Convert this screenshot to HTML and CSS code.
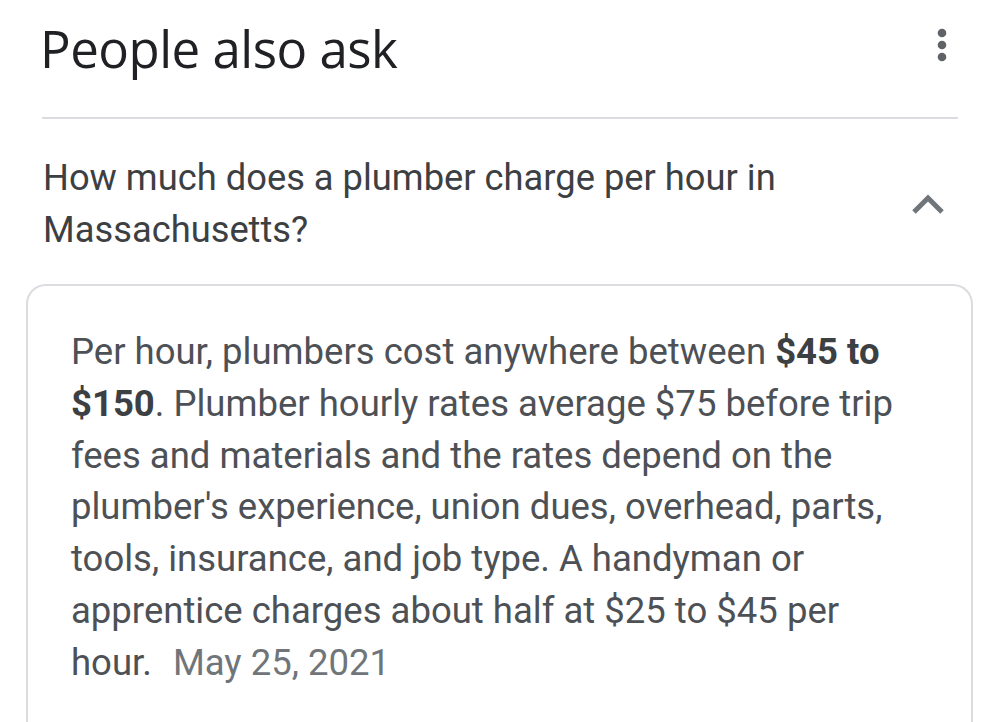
FILE: index.html
```html
<!DOCTYPE html>
<html>
<head>
<meta charset="utf-8">
<link rel="stylesheet" href="styles.css">
</head>
<body>
<div class="paa">
  <div class="header">
    <h2 class="title">People also ask</h2>
    <div class="kebab" aria-label="More options">
      <svg width="10" height="36" viewBox="0 0 10 36"><circle cx="5" cy="5" r="4.3" fill="#5f6368"/><circle cx="5" cy="17" r="4.3" fill="#5f6368"/><circle cx="5" cy="29" r="4.3" fill="#5f6368"/></svg>
    </div>
  </div>
  <div class="question">
    <div class="q-text">How much does a plumber charge per hour in Massachusetts?</div>
    <div class="chevron">
      <svg width="34" height="22" viewBox="0 0 34 22"><path d="M3 19 L17 5 L31 19" fill="none" stroke="#70757a" stroke-width="5"/></svg>
    </div>
  </div>
  <div class="card">
    <p class="answer">Per hour, plumbers cost anywhere between <b>$45 to $150</b>. Plumber hourly rates average $75 before trip fees and materials and the rates depend on the plumber's experience, union dues, overhead, parts, tools, insurance, and job type. A handyman or apprentice charges about half at $25 to $45 per hour. <span class="date">May 25, 2021</span></p>
  </div>
</div>
</body>
</html>
```

FILE: styles.css
```css
html, body {
  margin: 0;
  padding: 0;
  background: #ffffff;
}
body {
  font-family: Roboto, "Liberation Sans", Arial, sans-serif;
  overflow: hidden;
}
.paa {
  padding: 0 27px 0 26px;
}
.header {
  display: flex;
  justify-content: space-between;
  align-items: flex-start;
  margin: 0 15px 0 16px;
  border-bottom: 2px solid #dadce0;
  height: 119px;
  box-sizing: border-box;
}
.title {
  margin: 0 0 0 -2px;
  padding-top: 14px;
  font-family: "Open Sans", Roboto, sans-serif;
  font-weight: 400;
  font-size: 51px;
  line-height: 68px;
  color: #202124;
  letter-spacing: -0.5px;
}
.kebab {
  padding-top: 28px;
  margin-right: 11px;
}
.kebab svg { display: block; }
.question {
  display: flex;
  justify-content: space-between;
  align-items: center;
  margin: 0 15px 0 17px;
  padding: 33px 0 28px 0;
}
.q-text {
  font-size: 36.3px;
  line-height: 52px;
  color: #3c4043;
  max-width: 820px;
}
.chevron {
  margin-right: 13px;
}
.chevron svg { display: block; }
.card {
  border: 2px solid #dadce0;
  border-bottom: none;
  border-radius: 20px 20px 0 0;
  padding: 40px 42px 60px 43px;
}
.answer {
  margin: 0;
  font-size: 36.5px;
  line-height: 51.8px;
  color: #4d5156;
}
.answer b {
  font-weight: 700;
  color: #3c4043;
}
.date {
  color: #70757a;
  margin-left: 12px;
}
```
